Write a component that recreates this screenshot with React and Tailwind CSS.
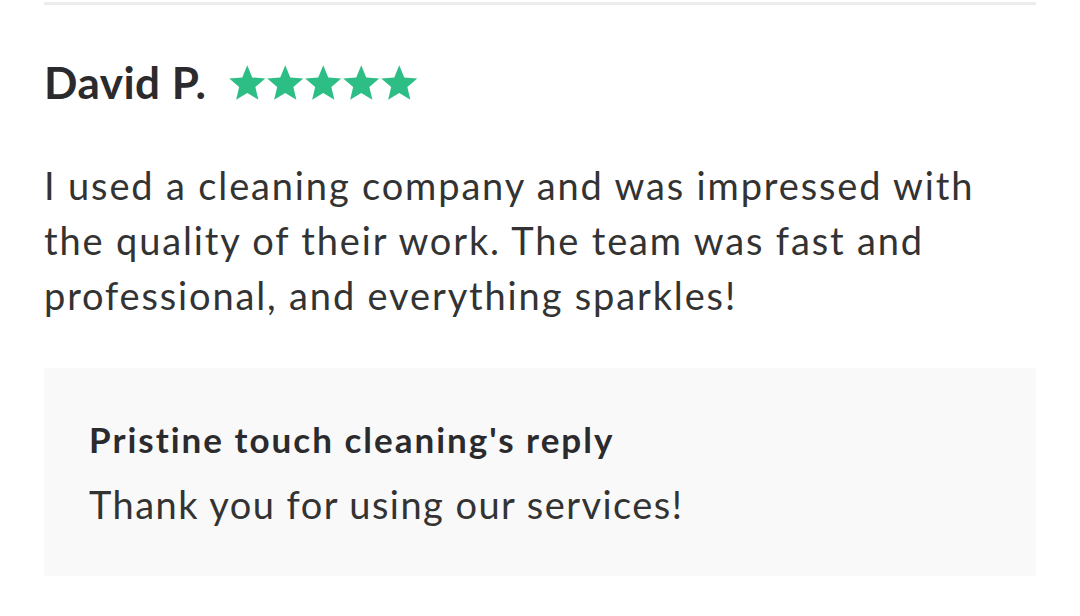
import { useState } from 'react';

const Star = () => (
  <svg viewBox="1.3 1.6 21.4 20.6" className="w-[36.5px] h-[35px] mr-[1.5px]" fill="#2dbe86">
    <path d="M12 1.8l2.95 7.1 7.65.6-5.83 5 1.78 7.5L12 18.03 5.45 22l1.78-7.5-5.83-5 7.65-.6z" />
  </svg>
);

export default function App() {
  const [rating] = useState(5);

  return (
    <div className="w-[1080px] h-[616px] bg-white text-[#2b2b2d] font-['Lato',sans-serif]">
      <div className="mx-[44px] pt-[2px]">
        <div className="h-[3px] bg-[#ececec]" />

        <div className="flex items-center gap-[23px] mt-[53px]">
          <h2 className="text-[44px] leading-[48px] font-bold tracking-[0.5px]">David P.</h2>
          <div className="flex items-center">
            {Array.from({ length: rating }).map((_, i) => (
              <Star key={i} />
            ))}
          </div>
        </div>

        <p className="mt-[52px] text-[38px] leading-[55px] tracking-[1.85px] text-[#333] w-[980px]">
          I used a cleaning company and was impressed with the quality of their work. The team was fast and
          professional, and everything sparkles!
        </p>

        <div className="mt-[45px] h-[208px] bg-[#f9f9f9] px-[45px] pt-[49px]">
          <p className="text-[35px] leading-[44px] font-bold tracking-[2px]">Pristine touch cleaning's reply</p>
          <p className="mt-[21px] text-[38px] leading-[44px] tracking-[1.45px] text-[#333]">
            Thank you for using our services!
          </p>
        </div>
      </div>
    </div>
  );
}
